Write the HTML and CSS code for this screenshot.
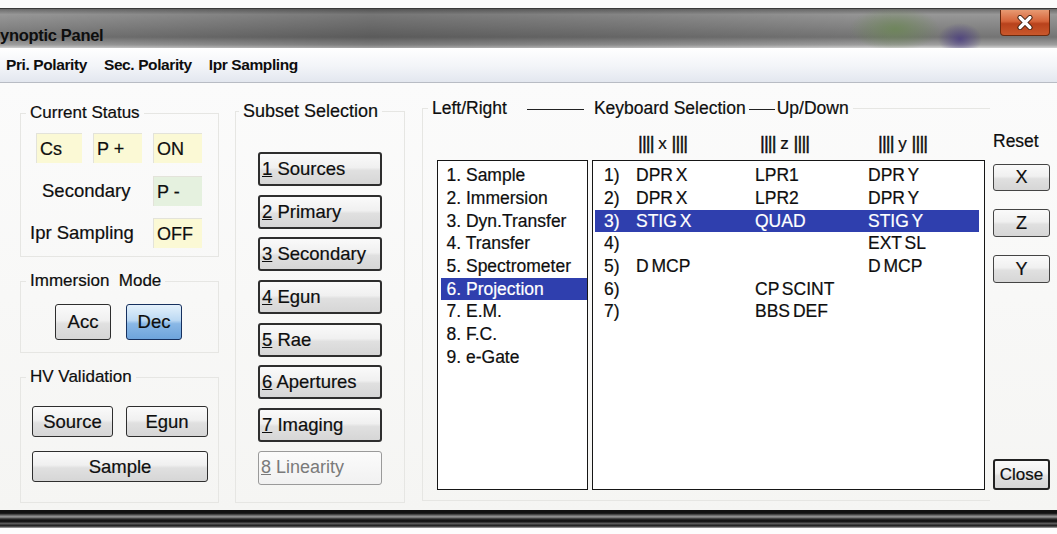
FILE: index.html
```html
<!DOCTYPE html>
<html lang="en">
	<head>
		<meta charset="UTF-8" />
		<meta name="viewport" content="width=device-width, initial-scale=1.0" />
		<title>Synoptic Panel</title>
		<link rel="stylesheet" href="styles.css">
	</head>
	<body>
		<div class="screen-top"></div>
		<header class="titlebar">
			<span class="title">ynoptic Panel</span>
			<button class="close-x" aria-label="close">
				<svg width="18" height="15" viewBox="0 0 18 15">
					<path d="M4 2.5 L14 12.5 M14 2.5 L4 12.5" stroke="#3a1a0a" stroke-width="5" stroke-linecap="round" />
					<path d="M4 2.5 L14 12.5 M14 2.5 L4 12.5" stroke="#fff" stroke-width="3.2" stroke-linecap="round" />
				</svg>
			</button>
		</header>
		<nav class="menubar">
			<span>Pri. Polarity</span>
			<span>Sec. Polarity</span>
			<span>Ipr Sampling</span>
		</nav>

		<main class="panel">
			<!-- left column: status, immersion, hv -->
			<div class="col-status">
				<fieldset class="group status-group">
					<legend>Current Status</legend>
					<div class="group-body">
						<div class="status-row cells-row">
							<span class="cell yellow w46">Cs</span>
							<span class="cell yellow">P +</span>
							<span class="cell yellow">ON</span>
						</div>
						<div class="status-row">
							<span class="status-label indent">Secondary</span>
							<span class="cell green">P -</span>
						</div>
						<div class="status-row">
							<span class="status-label">Ipr Sampling</span>
							<span class="cell yellow">OFF</span>
						</div>
					</div>
				</fieldset>

				<fieldset class="group immersion-group">
					<legend>Immersion&nbsp; Mode</legend>
					<div class="group-body mode-row">
						<button class="btn mode-btn">Acc</button>
						<button class="btn mode-btn active">Dec</button>
					</div>
				</fieldset>

				<fieldset class="group hv-group">
					<legend>HV Validation</legend>
					<div class="group-body hv-grid">
						<button class="btn hv-btn">Source</button>
						<button class="btn hv-btn">Egun</button>
						<button class="btn hv-btn wide">Sample</button>
					</div>
				</fieldset>
			</div>

			<!-- subset buttons -->
			<fieldset class="group subset-group">
				<legend>Subset Selection</legend>
				<div class="group-body subset-list">
					<button class="btn subset-btn"><u>1</u> Sources</button>
					<button class="btn subset-btn"><u>2</u> Primary</button>
					<button class="btn subset-btn"><u>3</u> Secondary</button>
					<button class="btn subset-btn"><u>4</u> Egun</button>
					<button class="btn subset-btn"><u>5</u> Rae</button>
					<button class="btn subset-btn"><u>6</u> Apertures</button>
					<button class="btn subset-btn"><u>7</u> Imaging</button>
					<button class="btn subset-btn disabled"><u>8</u> Linearity</button>
				</div>
			</fieldset>

			<!-- keyboard selection -->
			<fieldset class="group keys-group">
				<legend>Left/Right<span class="dash long"></span>Keyboard Selection<span class="dash short"></span>Up/Down</legend>
				<div class="group-body">
					<div class="axis-head">
						<span><i>||||</i> x <i>||||</i></span>
						<span><i>||||</i> z <i>||||</i></span>
						<span><i>||||</i> y <i>||||</i></span>
					</div>
					<div class="lists">
						<ul class="listbox sections">
							<li>1. Sample</li>
							<li>2. Immersion</li>
							<li>3. Dyn.Transfer</li>
							<li>4. Transfer</li>
							<li>5. Spectrometer</li>
							<li class="selected">6. Projection</li>
							<li>7. E.M.</li>
							<li>8. F.C.</li>
							<li>9. e-Gate</li>
						</ul>
						<div class="listbox elements">
							<div class="el-row"><span>1)</span><span>DPR X</span><span>LPR1</span><span>DPR Y</span></div>
							<div class="el-row"><span>2)</span><span>DPR X</span><span>LPR2</span><span>DPR Y</span></div>
							<div class="el-row selected"><span>3)</span><span>STIG X</span><span>QUAD</span><span>STIG Y</span></div>
							<div class="el-row"><span>4)</span><span></span><span></span><span>EXT SL</span></div>
							<div class="el-row"><span>5)</span><span>D MCP</span><span></span><span>D MCP</span></div>
							<div class="el-row"><span>6)</span><span></span><span>CP SCINT</span><span></span></div>
							<div class="el-row"><span>7)</span><span></span><span>BBS DEF</span><span></span></div>
						</div>
					</div>
				</div>
			</fieldset>

			<!-- reset / close -->
			<div class="col-side">
				<span class="reset-label">Reset</span>
				<button class="btn side-btn first">X</button>
				<button class="btn side-btn">Z</button>
				<button class="btn side-btn">Y</button>
				<button class="btn side-btn close-btn">Close</button>
			</div>
		</main>

		<div class="bezel"></div>
	</body>
</html>
```

FILE: styles.css
```css
body {
	margin: 0;
	width: 1057px;
	height: 534px;
	overflow: hidden;
	background: #fdfdfd;
	font-family: "Liberation Sans", Arial, sans-serif;
	color: #0e0e0e;
}
button {
	font-family: inherit;
	color: inherit;
	cursor: default;
}

/* window chrome */
.screen-top {
	height: 8px;
	background: #fbfbfb;
}
.titlebar {
	display: flex;
	align-items: flex-start;
	height: 40px;
	box-sizing: border-box;
	border-top: 1px solid #3a3a3a;
	background:
		radial-gradient(ellipse 22px 16px at 960px 30px, rgba(70, 55, 130, 0.75), transparent),
		radial-gradient(ellipse 45px 22px at 895px 20px, rgba(105, 135, 80, 0.75), transparent),
		linear-gradient(to right, rgba(0, 0, 0, 0) 0, rgba(0, 0, 0, 0.22) 35%, rgba(0, 0, 0, 0.12) 60%, rgba(0, 0, 0, 0) 85%),
		linear-gradient(to bottom, #6a6a6a 0, #979797 14%, #858585 45%, #747474 72%, #a0a0a0 92%, #d2d2d2 100%);
}
.title {
	font-size: 16.5px;
	font-weight: bold;
	line-height: 20px;
	margin-top: 16px;
	letter-spacing: -0.3px;
}
.close-x {
	display: flex;
	align-items: center;
	justify-content: center;
	margin: 1px 7px 0 auto;
	width: 50px;
	height: 26px;
	padding: 0;
	border: 1px solid #6a2a0e;
	border-top: none;
	border-radius: 0 0 4px 4px;
	background: linear-gradient(to bottom, #e89a72 0, #d5643a 45%, #b8421c 55%, #c9582c 100%);
}
.menubar {
	display: flex;
	gap: 17px;
	height: 34px;
	padding-left: 6px;
	align-items: center;
	border-bottom: 1px solid #b8bcc4;
	background: linear-gradient(to bottom, #ffffff 0, #f2f4f8 55%, #e3e7ef 100%);
	font-size: 15.5px;
	font-weight: bold;
	letter-spacing: -0.4px;
}

/* main panel */
.panel {
	display: flex;
	height: 427px;
	padding-left: 20px;
	background: linear-gradient(to bottom, #fbfbfb, #f5f5f3);
	-webkit-text-stroke: 0.2px #0e0e0e;
}
.group {
	margin: 0;
	padding: 0;
	border: 1px solid #e6e6e3;
	min-width: 0;
	box-sizing: border-box;
}
.group legend {
	padding: 0 4px;
	margin-left: 5px;
	font-size: 17px;
	line-height: 20px;
	white-space: nowrap;
}

.col-status {
	display: flex;
	flex-direction: column;
	width: 199px;
}
.status-group {
	margin-top: 20px;
}
.status-group .group-body {
	padding: 10px 16px 8px 9px;
}
.status-row {
	display: flex;
	align-items: center;
	justify-content: space-between;
	height: 30px;
}
.status-row + .status-row {
	margin-top: 12.5px;
}
.cells-row {
	justify-content: flex-start;
	gap: 11px;
	padding-left: 6px;
}
.status-label {
	font-size: 18.5px;
}
.status-label.indent {
	padding-left: 12px;
}
.cell {
	width: 49px;
	height: 30px;
	box-sizing: border-box;
	padding-left: 3px;
	font-size: 18px;
	line-height: 30px;
	border-top: 1px solid #e3e3da;
	border-left: 1px solid #e3e3da;
}
.cell.w46 {
	width: 46px;
}
.cell.yellow {
	background: #fbf9d5;
}
.cell.green {
	background: #e5f1df;
}

.btn {
	box-sizing: border-box;
	padding: 0;
	border: 1.5px solid #2e2e2e;
	border-radius: 3px;
	background: linear-gradient(to bottom, #fafafa 0, #f0f0f0 45%, #e0e0e0 55%, #d6d6d6 100%);
	font-size: 18.5px;
}

.immersion-group {
	margin-top: 14px;
}
.mode-row {
	display: flex;
	gap: 15px;
	padding: 13px 0 12px 34px;
}
.mode-btn {
	width: 56px;
	height: 36px;
	font-size: 18.5px;
}
.mode-btn.active {
	border-color: #16305e;
	background: linear-gradient(to bottom, #e4f1fb 0, #bcd9f3 45%, #8ab8e6 55%, #6ea4dc 100%);
}

.hv-group {
	margin-top: 14px;
}
.hv-grid {
	display: grid;
	grid-template-columns: 81px 82px;
	column-gap: 13px;
	row-gap: 14px;
	padding: 19px 0 20px 11px;
}
.hv-btn {
	height: 31px;
}
.hv-btn.wide {
	grid-column: 1 / 3;
}

.subset-group {
	width: 170px;
	margin: 18px 0 0 16px;
	align-self: flex-start;
}
.subset-group legend {
	margin-left: 3px;
	font-size: 18px;
}
.subset-list {
	display: flex;
	flex-direction: column;
	gap: 8.7px;
	padding: 31px 0 17px 22px;
}
.subset-btn {
	width: 124px;
	height: 34px;
	text-align: left;
	padding-left: 2px;
	border-width: 2px;
}
.subset-btn.disabled {
	border: 1px solid #9a9a9a;
	color: #7a7a7a;
	-webkit-text-stroke: 0;
	background: linear-gradient(to bottom, #fbfbfb, #f1f1f1);
	font-size: 18px;
}

/* keyboard selection group */
.keys-group {
	width: 568px;
	margin: 15px 0 0 17px;
	border-right: none;
	align-self: flex-start;
}
.keys-group legend {
	font-size: 17.5px;
}
.keys-group .group-body {
	padding: 15px 0 10px 0;
}
.dash {
	display: inline-block;
	vertical-align: middle;
	border-top: 1.5px solid #222;
}
.dash.long {
	width: 57px;
	margin: 0 10px 0 20px;
}
.dash.short {
	width: 26px;
	margin: 0 2px 0 3px;
}
.axis-head {
	display: grid;
	grid-template-columns: 122px 118px auto;
	padding-left: 215px;
	height: 20px;
	line-height: 20px;
	font-size: 17px;
	white-space: pre;
}
.axis-head i {
	font-style: normal;
	font-size: 18.5px;
	letter-spacing: -0.9px;
	-webkit-text-stroke: 0.4px #0e0e0e;
}
.lists {
	display: flex;
	gap: 4px;
	margin-top: 7px;
	padding-left: 14px;
}
.listbox {
	margin: 0;
	height: 330px;
	box-sizing: border-box;
	border: 1.5px solid #161616;
	background: #fff;
	list-style: none;
	font-size: 17.5px;
}
.sections {
	width: 151px;
	padding: 3.2px 0.5px 0 2.5px;
}
.sections li {
	height: 22.7px;
	line-height: 22.7px;
	padding-left: 6px;
}
.selected {
	background: #2f3fae;
	color: #fff;
	-webkit-text-stroke: 0.2px #fff;
}
.elements {
	width: 393px;
	padding: 3.2px 5.5px 0 2px;
	word-spacing: -2px;
}
.el-row {
	display: grid;
	grid-template-columns: 32px 119px 113px 1fr;
	height: 22.7px;
	line-height: 22.7px;
	padding-left: 9px;
}

/* right side buttons */
.col-side {
	display: flex;
	flex-direction: column;
	width: 57px;
	margin-left: 3px;
	padding: 48px 0 20px 0;
	box-sizing: border-box;
}
.reset-label {
	font-size: 17.5px;
	line-height: 20px;
}
.side-btn {
	height: 28px;
	margin-top: 18px;
	border-color: #444;
	font-size: 18px;
}
.side-btn.first {
	margin-top: 13px;
	height: 27px;
}
.close-btn {
	margin-top: auto;
	height: 31px;
	border-width: 2px;
	border-color: #222;
	font-size: 17px;
}

.bezel {
	height: 18px;
	background: linear-gradient(to bottom, #111 0, #111 18%, #6a6a6a 30%, #9a9a9a 38%, #2a2a2a 50%, #0c0c0c 62%, #5a5a5a 75%, #1a1a1a 88%, #b0b0b0 100%);
}
```
